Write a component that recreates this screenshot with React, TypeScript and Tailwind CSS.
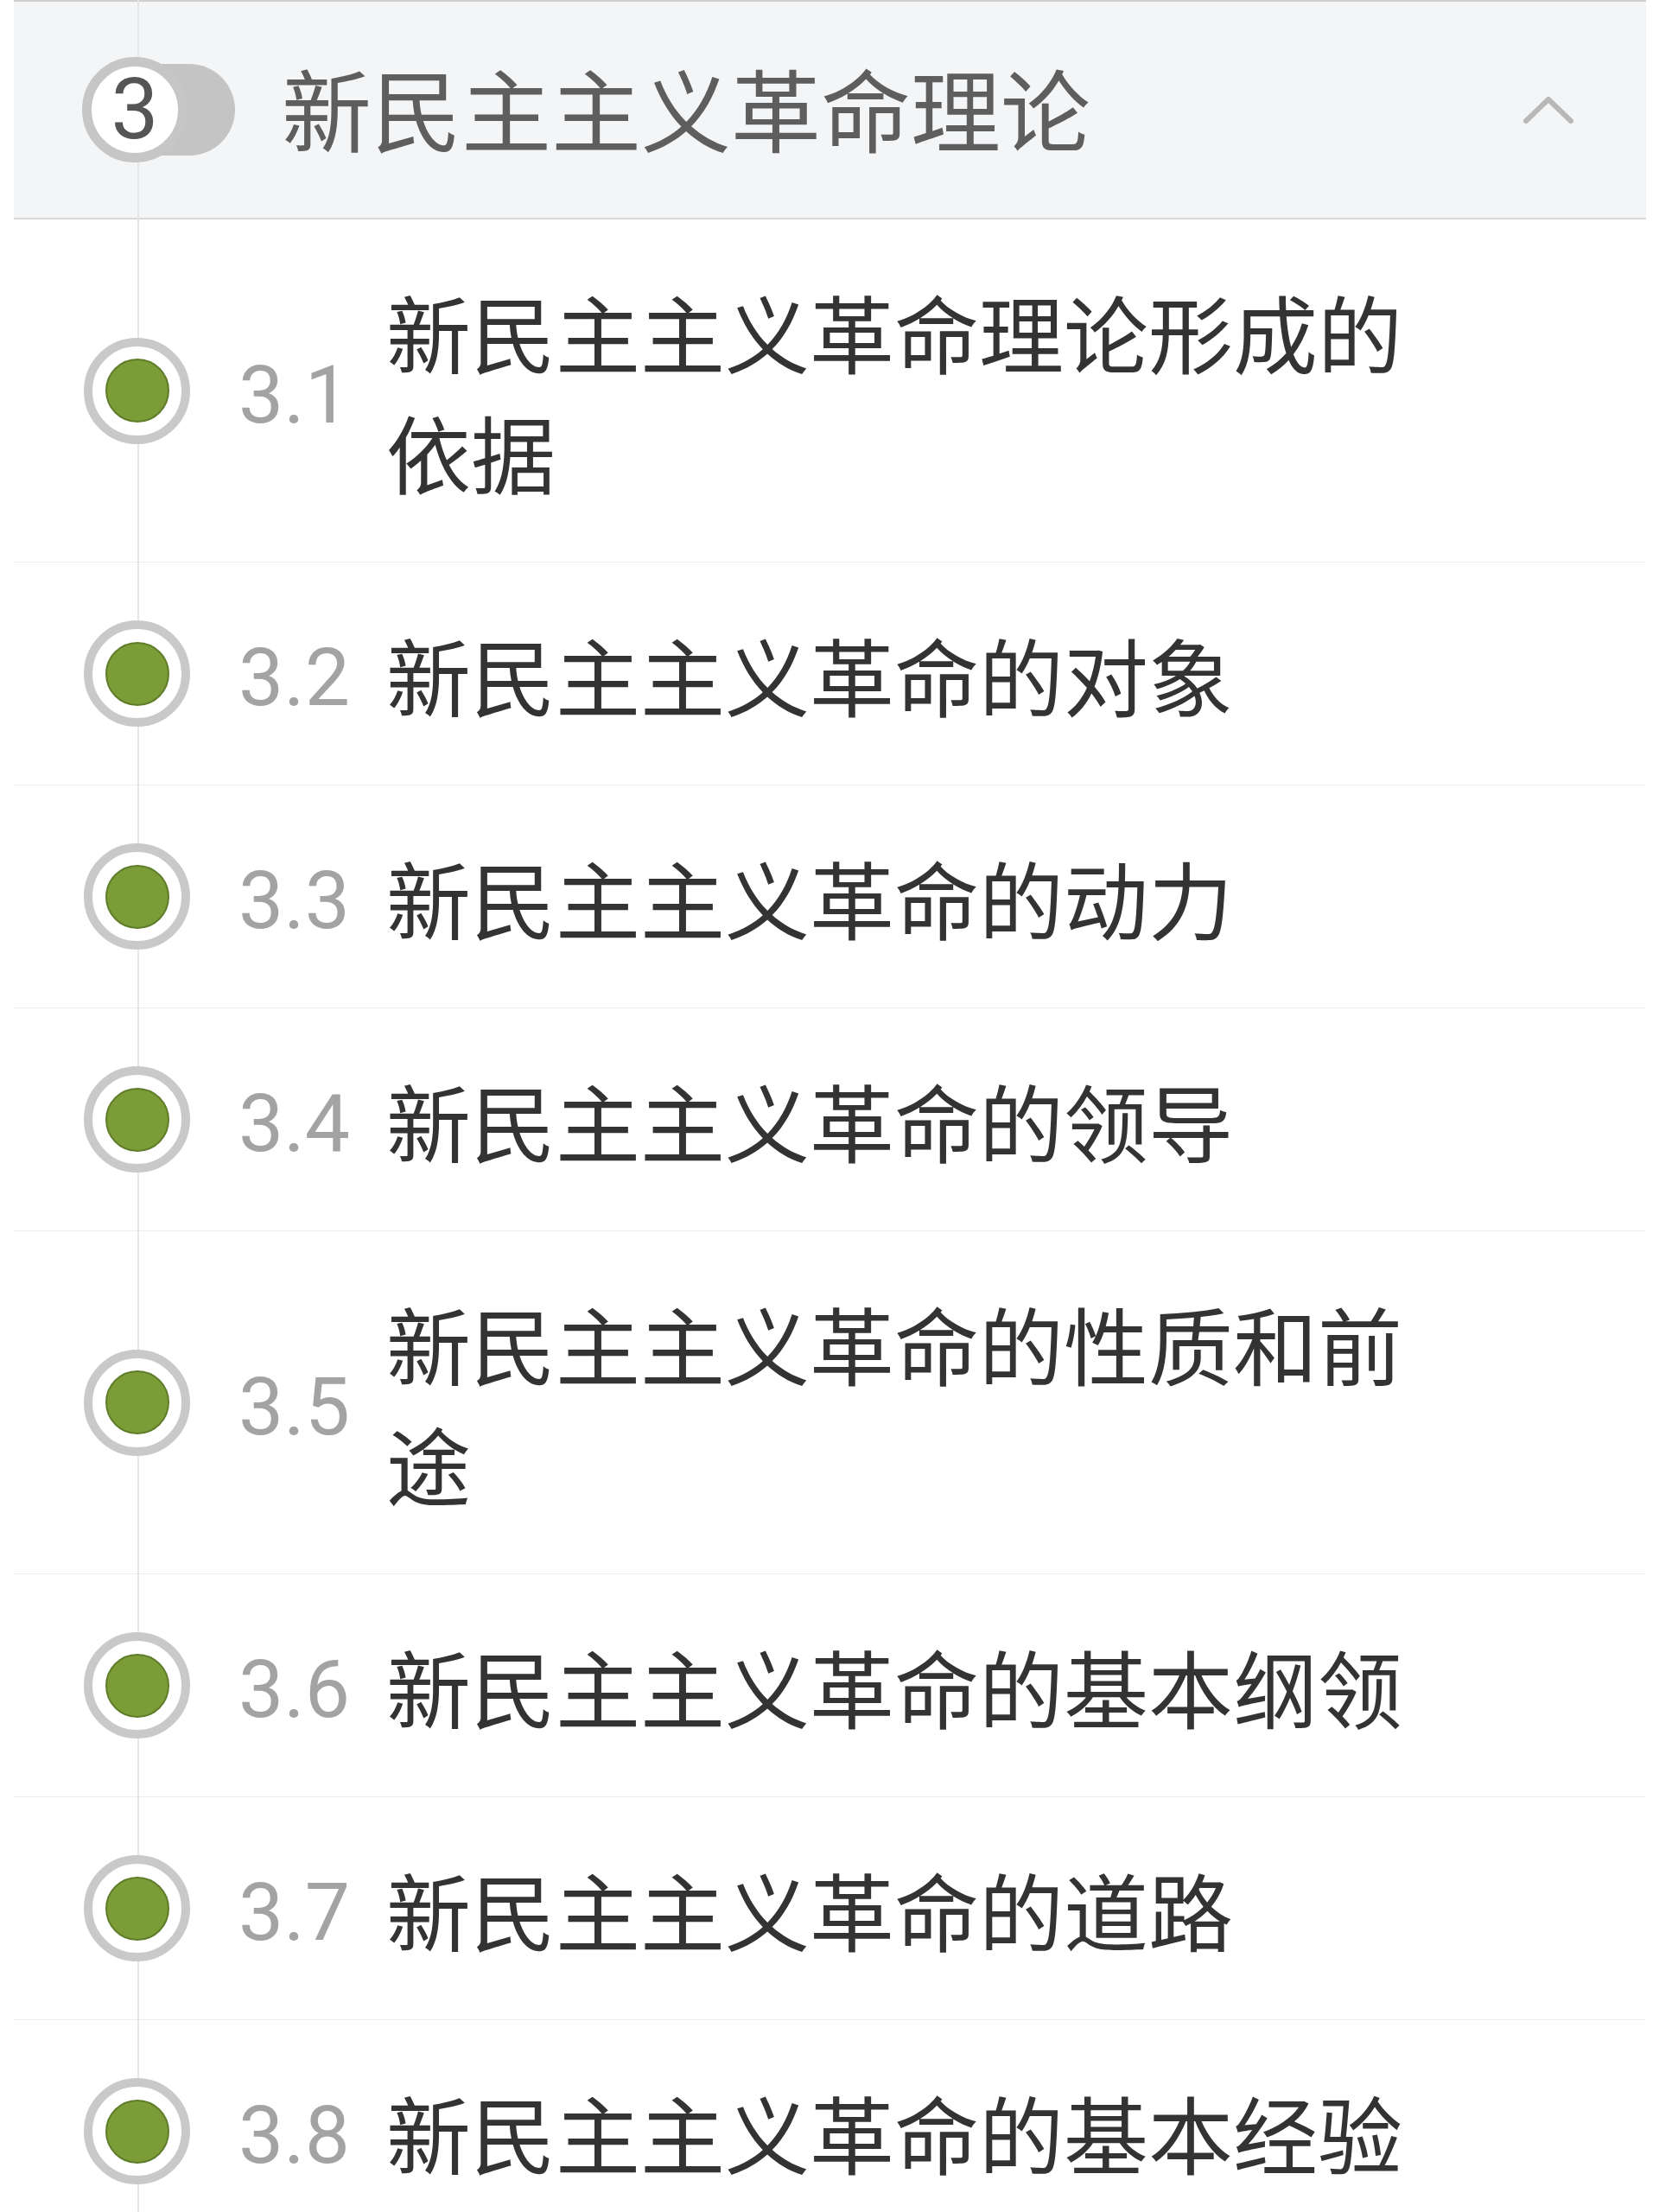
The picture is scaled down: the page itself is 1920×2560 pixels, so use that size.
import React from 'react'

interface Section {
  num: string;
  title: string;
}

const sections: Section[] = [
  { num: '3.1', title: '新民主主义革命理论形成的依据' },
  { num: '3.2', title: '新民主主义革命的对象' },
  { num: '3.3', title: '新民主主义革命的动力' },
  { num: '3.4', title: '新民主主义革命的领导' },
  { num: '3.5', title: '新民主主义革命的性质和前途' },
  { num: '3.6', title: '新民主主义革命的基本纲领' },
  { num: '3.7', title: '新民主主义革命的道路' },
  { num: '3.8', title: '新民主主义革命的基本经验' },
]

// 章节序号徽章（圆圈 + 灰色胶囊）
function ChapterBadge({ n }: { n: number }) {
  return (
    <div className="flex items-center">
      <div className="relative z-10 flex h-[122px] w-[122px] items-center justify-center rounded-full border-[11px] border-[#c6c6c6] bg-white">
        <span className="font-['Roboto','Liberation_Sans',sans-serif] text-[98px] leading-none text-[#555555]">{n}</span>
      </div>
      <div className="-ml-[46px] h-[106px] w-[101px] rounded-r-full bg-[#c4c4c4]" />
    </div>
  )
}

function Dot() {
  return (
    <div className="relative z-10 flex h-[123px] w-[123px] shrink-0 items-center justify-center rounded-full border-[10px] border-[#c9c9c9] bg-white">
      <div className="h-[74px] w-[74px] rounded-full border-2 border-[#5f7d2a] bg-[#7b9c36]" />
    </div>
  )
}

export default function App() {
  return (
    <div className="relative h-[2560px] w-[1920px] overflow-hidden bg-white font-['Noto_Sans_CJK_SC','Noto_Sans',sans-serif]">
      {/* 时间轴竖线 */}
      <div className="absolute bottom-0 left-[159px] top-0 z-[1] w-[2px] bg-[#e6e6e6]" />

      <div className="pl-[16px] pr-[15px]">
        {/* 章节标题 */}
        <div className="flex h-[254px] items-center border-b-2 border-t-2 border-b-[#d6d7d9] border-t-[#cfcfcf] bg-[#f4f5f7] pl-[79px]">
          <ChapterBadge n={3} />
          <h1 className="relative z-10 -mt-[6px] ml-[54px] text-[104px] font-normal leading-none text-[#5e5e5e]">新民主主义革命理论</h1>
          <svg className="ml-auto mr-[84px] h-[34px] w-[58px]" viewBox="0 0 58 34" fill="none">
            <path d="M3 30 L29 5 L55 30" stroke="#b8b8b8" strokeWidth="6" strokeLinecap="round" strokeLinejoin="round" />
          </svg>
        </div>

        {/* 小节列表 */}
        {sections.map((s) => (
          <div key={s.num} className="flex items-center border-b border-[#ececec] py-[59px] pl-[81px]">
            <Dot />
            <span className="ml-[56px] mt-[10px] shrink-0 font-['Roboto','Liberation_Sans',sans-serif] text-[93px] leading-none text-[#a3a3a3]">{s.num}</span>
            <p className="ml-[42px] w-[1220px] text-[98px] leading-[139px] text-[#333333]">{s.title}</p>
          </div>
        ))}
      </div>
    </div>
  )
}
